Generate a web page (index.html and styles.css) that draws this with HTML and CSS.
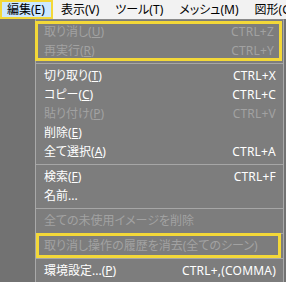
FILE: index.html
```html
<!DOCTYPE html>
<html lang="ja">
<head>
<meta charset="utf-8">
<link rel="stylesheet" href="styles.css">
</head>
<body>
<div class="menubar">
  <div class="mb-item active">編集(E)</div>
  <div class="mb-item">表示(V)</div>
  <div class="mb-item">ツール(T)</div>
  <div class="mb-item">メッシュ(M)</div>
  <div class="mb-item">図形(G)</div>
</div>
<div class="menu">
  <div class="group group-top">
    <div class="row disabled"><span>取り消し(<u>U</u>)</span><span class="sc">CTRL+Z</span></div>
    <div class="row disabled"><span>再実行(<u>R</u>)</span><span class="sc">CTRL+Y</span></div>
  </div>
  <div class="sep"></div>
  <div class="row"><span>切り取り(<u>T</u>)</span><span class="sc">CTRL+X</span></div>
  <div class="row"><span>コピー(<u>C</u>)</span><span class="sc">CTRL+C</span></div>
  <div class="row disabled"><span>貼り付け(<u>P</u>)</span><span class="sc">CTRL+V</span></div>
  <div class="row"><span>削除(<u>E</u>)</span></div>
  <div class="row"><span>全て選択(<u>A</u>)</span><span class="sc">CTRL+A</span></div>
  <div class="sep"></div>
  <div class="row"><span>検索(<u>F</u>)</span><span class="sc">CTRL+F</span></div>
  <div class="row"><span>名前...</span></div>
  <div class="sep"></div>
  <div class="row disabled"><span>全ての未使用イメージを削除</span></div>
  <div class="sep"></div>
  <div class="group group-bottom">
    <div class="row disabled"><span>取り消し操作の履歴を消去(全てのシーン)</span></div>
  </div>
  <div class="sep"></div>
  <div class="row"><span>環境設定...(<u>P</u>)</span><span class="sc">CTRL+,(COMMA)</span></div>
</div>
</body>
</html>
```
FILE: styles.css
```css
html, body {
  margin: 0;
  padding: 0;
}
body {
  background: #727272;
  font-family: "Noto Sans", "Noto Sans CJK JP", sans-serif;
  font-size: 12px;
  font-feature-settings: "palt";
  width: 286px;
  height: 282px;
  overflow: hidden;
}
.menubar {
  display: flex;
  height: 19px;
  background: #f2f2f2;
  color: #000;
  align-items: stretch;
  overflow: hidden;
}
.mb-item {
  display: flex;
  align-items: center;
  padding: 0 8px;
  white-space: nowrap;
  line-height: 1;
  flex: none;
}
.mb-item.active {
  background: #cce8ff;
  box-shadow: inset 0 0 0 2px #f3d838;
  padding: 0 8px 0 7px;
}
.menu {
  margin-left: 35px;
  width: 247px;
  border-left: 1px solid #a9a9a9;
  border-right: 1px solid #a9a9a9;
  border-top: 1px solid #8a8a8a;
  background: #7d7d7d;
  padding-top: 2px;
  height: 270px;
  color: #fff;
}
.row {
  height: 19px;
  display: flex;
  align-items: center;
  justify-content: space-between;
  padding: 0 7px 0 8px;
  white-space: nowrap;
  line-height: 1;
}
.row u {
  text-decoration-thickness: 1px;
  text-underline-offset: 1px;
}
.disabled {
  color: #a2a2a2;
}
.sc {
  letter-spacing: 0.2px;
}
.sep {
  height: 6px;
  display: flex;
  align-items: center;
}
.sep::before {
  content: "";
  flex: 1;
  height: 1px;
  background: #a6a6a6;
}
.group {
  margin-right: 2px;
}
.group-top {
  outline: 3px solid #f3d838;
  outline-offset: -2px;
}
.group-bottom {
  outline: 3px solid #f3d838;
  outline-offset: 0;
  margin-left: 3px;
  margin-right: 5px;
}
.group-bottom .row {
  padding-left: 5px;
}
```
